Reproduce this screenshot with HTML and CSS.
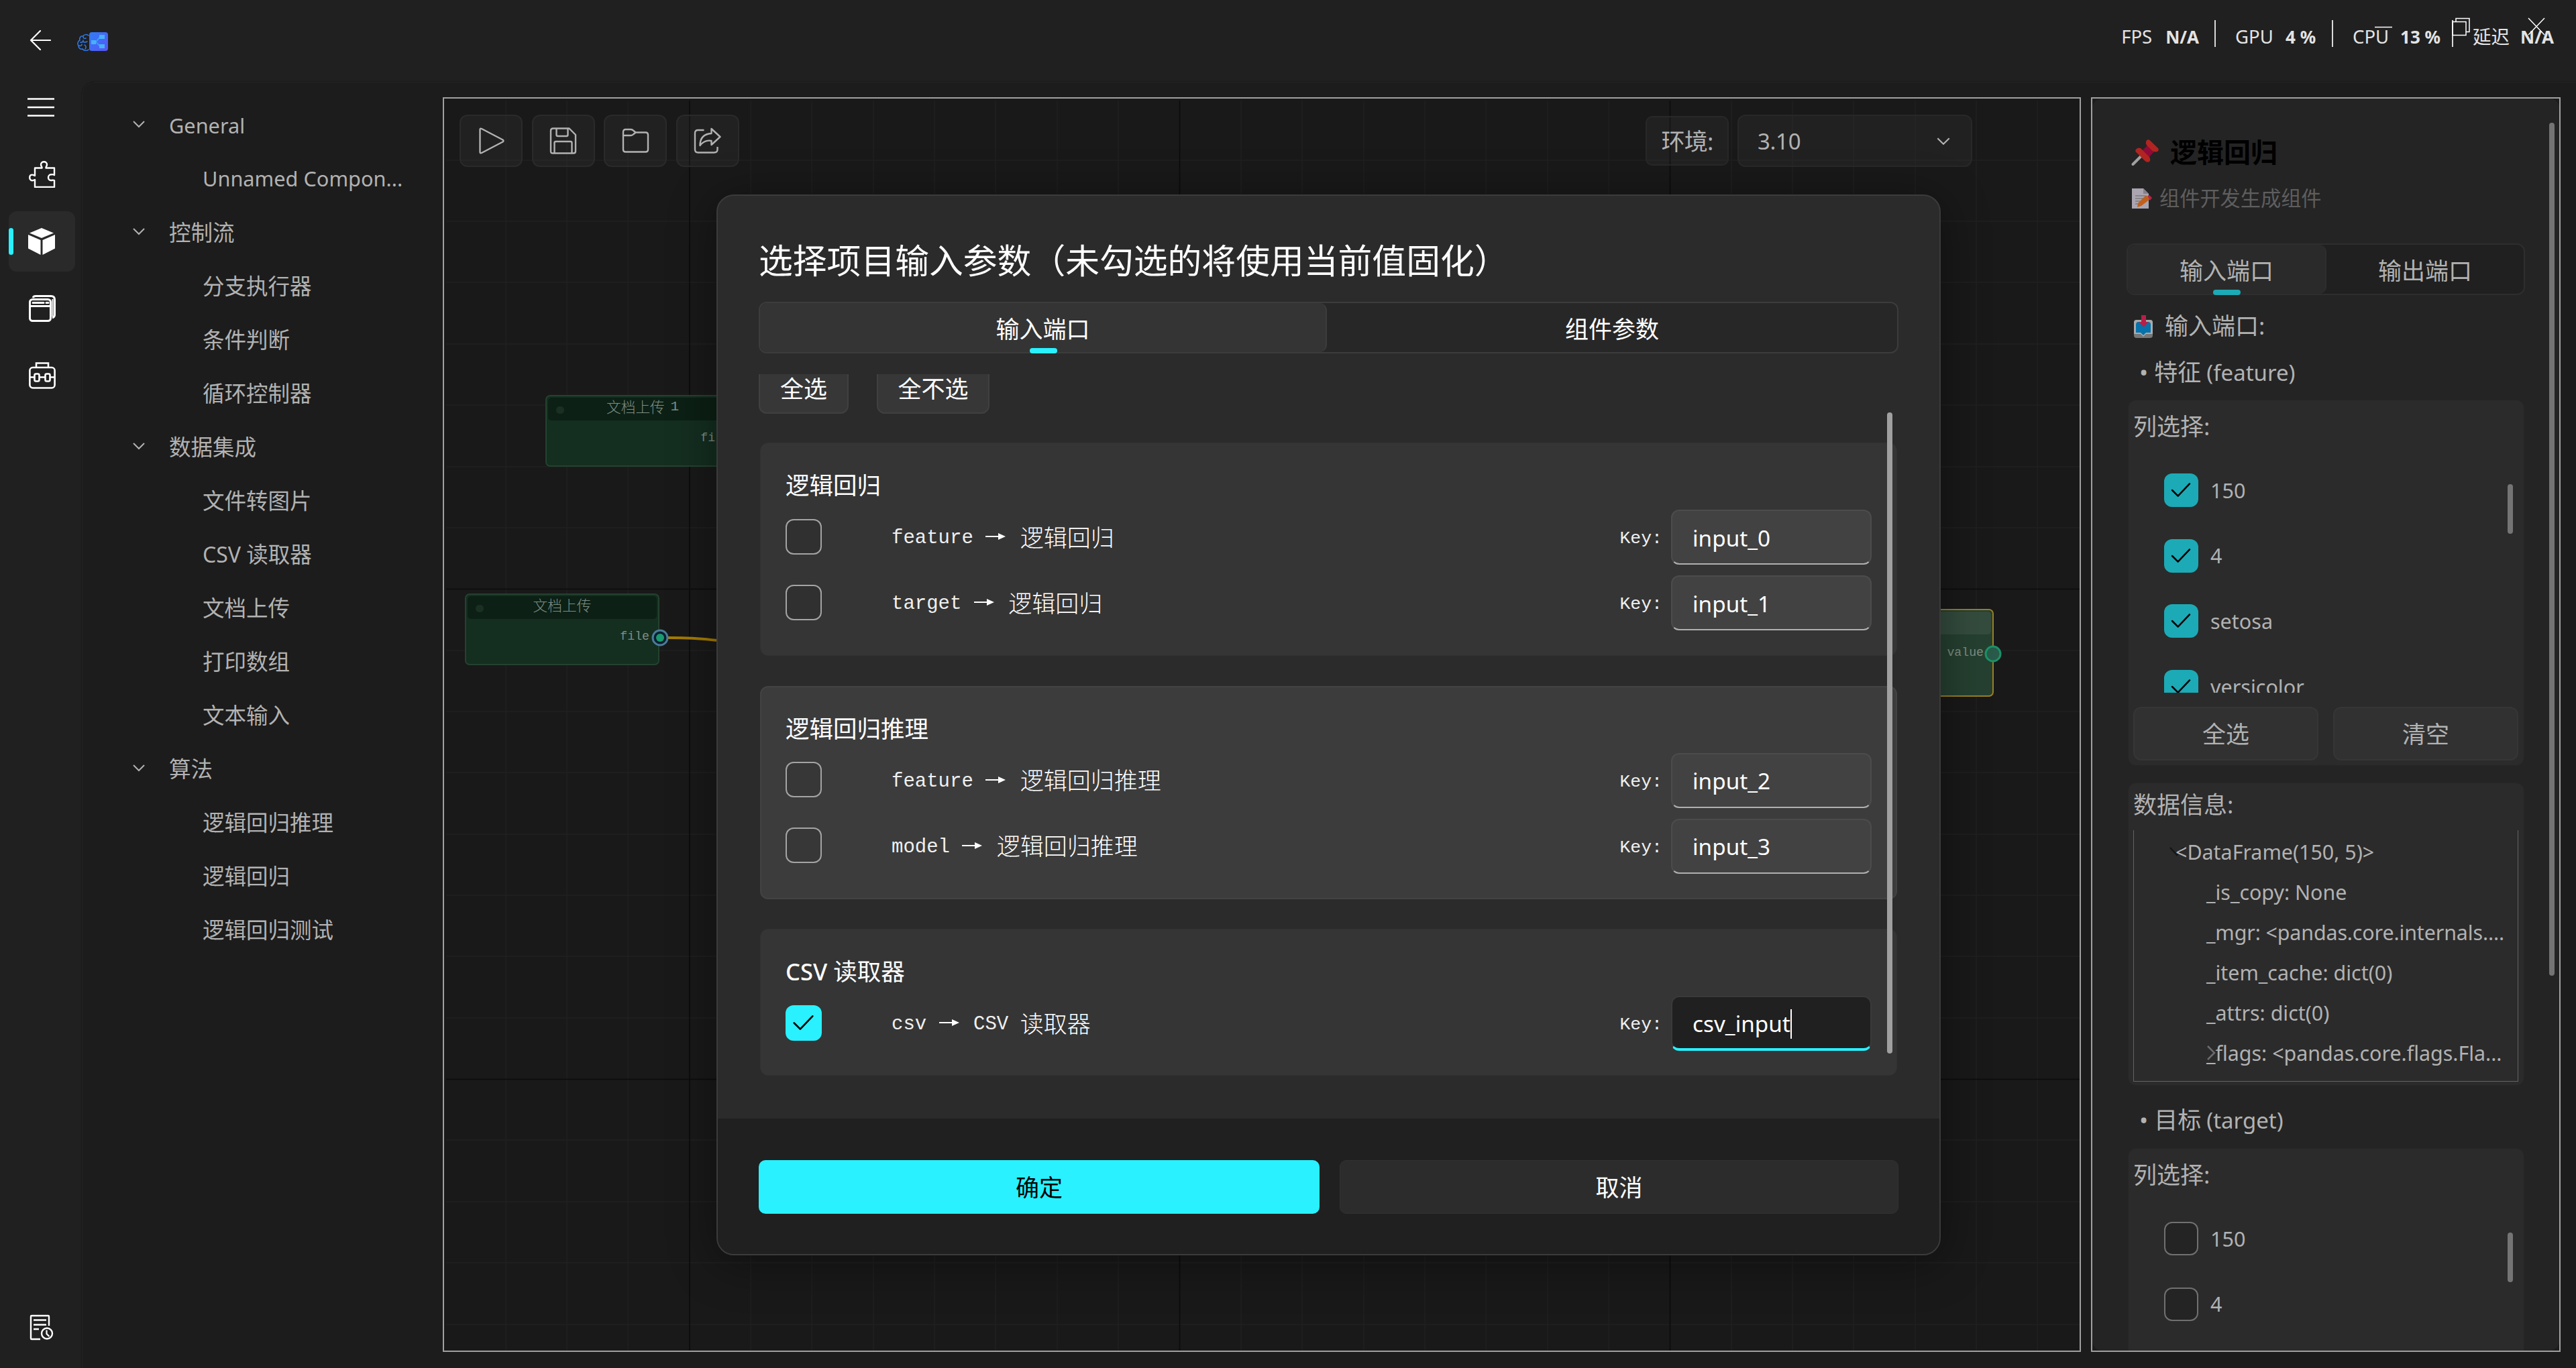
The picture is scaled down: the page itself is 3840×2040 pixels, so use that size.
FILE: index.html
```html
<!DOCTYPE html>
<html lang="zh-CN">
<head>
<meta charset="utf-8">
<title>逻辑回归</title>
<link rel="stylesheet" href="styles.css">
</head>
<body>
<svg class="defs" width="0" height="0">
  <symbol id="chev" viewBox="0 0 18 12"><path d="M1 2l8 8 8-8" fill="none" stroke="currentColor" stroke-width="2"/></symbol>
  <symbol id="tick" viewBox="0 0 52 52"><path d="M12 26l9 9 18-19" fill="none" stroke="#000" stroke-width="2.6" stroke-linecap="round" stroke-linejoin="round"/></symbol>
</svg>

<header class="topbar">
  <div class="brand">
    <svg class="back" viewBox="0 0 32 30"><path d="M31 15H2M16 1L2 15l14 14" fill="none" stroke="#fff" stroke-width="2.2" stroke-linecap="round" stroke-linejoin="round"/></svg>
    <svg class="logo" viewBox="0 0 46 28">
      <defs><linearGradient id="lg" x1="0" y1="0" x2="1" y2="1"><stop offset="0" stop-color="#2f7cf6"/><stop offset="1" stop-color="#5a55f5"/></linearGradient></defs>
      <path d="M17 5C15 3 10 3 9 6 5 5 3 9 4 12 1 13 0 18 2 20 2 24 5 26 8 25 10 28 15 28 17 26M9 7C9 9 11 10 13 9M5 15C8 16 9 13 9 12M9 14C11 16 13 15 15 14M3 20C5 21 7 20 7 18M11 19C13 20 14 23 12 25" fill="none" stroke="#2f7cf0" stroke-width="1.5" stroke-linecap="round"/>
      <rect x="18" y="0" width="28" height="28" rx="4" fill="url(#lg)"/>
      <path d="M25 14.500h3L34 7h4M28 14.500L34 21h4" fill="none" stroke="#3aa0f8" stroke-width="1.8"/>
      <path d="M21 12h7v6h-7zM33 4h8v6h-8zM33 18h8v6h-8z" fill="#4ab0fa"/>
    </svg>
  </div>
  <div class="stats">
    <div class="stat"><span class="k fps">FPS</span><b>N/A</b></div>
    <div class="stat s2"><span class="k">GPU</span><b>4 %</b></div>
    <div class="stat s3"><span class="k">CPU</span><b>13 %</b></div>
    <div class="stat s4"><span class="k">延迟</span><b>N/A</b></div>
  </div>
  <svg class="winctl" viewBox="0 0 260 30"><path d="M0 14.500H26" stroke="#fff" stroke-width="1.500" fill="none"/><path d="M116 6.500h20v20h-20zM121 6V1.500h20v20h-5M229 1l24 25M253 1l-24 25" fill="none" stroke="#fff" stroke-width="1.500"/></svg>
</header>

<div class="shell">
  <nav class="rail">
    <div class="item"><svg viewBox="0 0 40 40"><path d="M0 7.500h40M0 20h40M0 32.500h40" stroke="#fff" stroke-width="2.400" fill="none"/></svg></div>
    <div class="item"><svg viewBox="0 0 40 40"><path d="M9 10.500H19.500C20 9 18 8 18 5.500 18 3 20 1.300 22.500 1.300S27 3 27 5.500C27 8 25 9 25.500 10.500H38V21C36 19.500 34.500 20.300 33 20.300 30.500 20.300 29 22.500 29 24.800S30.500 29 33 29C35 29 36 28 38 29V39H9V28C7 29 6.500 29.200 5 29.200 2.500 29.200 1.200 27 1.200 24.800S2.500 20.600 5 20.600C6.500 20.600 7 21 9 22Z" fill="none" stroke="#fff" stroke-width="2.400" stroke-linejoin="round"/></svg></div>
    <div class="item on"><svg viewBox="0 0 40 40"><path d="M20 0l18 7.500L20 15 2 7.500zM0 10l18.500 8v22L0 30.500zM40 10l-18.500 8v22L40 30.500z" fill="#fff"/></svg></div>
    <div class="item"><svg viewBox="0 0 40 40"><rect x="1.500" y="6.500" width="31" height="32" rx="4" fill="none" stroke="#fff" stroke-width="3"/><path d="M6 4Q7 1.500 10 1.500H33Q38.500 1.500 38.500 7V30Q38 33 35 34M2 16.500H32" fill="none" stroke="#fff" stroke-width="3"/><path d="M35.500 6v26" stroke="#fff" stroke-width="2"/><path d="M6 11.500H22M26 11.500h3" stroke="#fff" stroke-width="3" stroke-linecap="round"/></svg></div>
    <div class="item"><svg viewBox="0 0 40 40"><rect x="1.400" y="8" width="37.200" height="30.500" rx="4.500" fill="none" stroke="#fff" stroke-width="2.600"/><path d="M11 8V1.500H29V8M2 22.500H8M16 22.500h8M32 22.500h6" fill="none" stroke="#fff" stroke-width="2.600"/><rect x="8.500" y="17.500" width="7" height="11" rx="2" fill="none" stroke="#fff" stroke-width="2.600"/><rect x="24.500" y="17.500" width="7" height="11" rx="2" fill="none" stroke="#fff" stroke-width="2.600"/></svg></div>
    <div class="item last"><svg viewBox="0 0 40 40"><path d="M17 37H4Q3 37 3 36V3Q3 2 4 2H29Q30 2 30 3V17" fill="none" stroke="#fff" stroke-width="2.400"/><path d="M7 8.500H26M7 15.500H26M7 22H15" stroke="#fff" stroke-width="2.400"/><circle cx="27" cy="28.500" r="8" fill="none" stroke="#fff" stroke-width="2.400"/><path d="M26.500 23.500V29l4 4" fill="none" stroke="#fff" stroke-width="2.200"/></svg></div>
  </nav>

  <main class="content">
    <ul class="tree">
      <li class="g"><svg><use href="#chev"/></svg><span class="lat">General</span></li>
      <li class="lat">Unnamed Compon...</li>
      <li class="g"><svg><use href="#chev"/></svg>控制流</li>
      <li>分支执行器</li>
      <li>条件判断</li>
      <li>循环控制器</li>
      <li class="g"><svg><use href="#chev"/></svg>数据集成</li>
      <li>文件转图片</li>
      <li><span class="csvl">CSV&nbsp;</span>读取器</li>
      <li>文档上传</li>
      <li>打印数组</li>
      <li>文本输入</li>
      <li class="g"><svg><use href="#chev"/></svg>算法</li>
      <li>逻辑回归推理</li>
      <li>逻辑回归</li>
      <li>逻辑回归测试</li>
    </ul>

    <section class="canvas">
      <svg class="grid" width="2438" height="1867">
        <path d="M92 3V1867M183 3V1867M274 3V1867M457 3V1867M548 3V1867M640 3V1867M731 3V1867M822 3V1867M914 3V1867M1005 3V1867M1188 3V1867M1279 3V1867M1371 3V1867M1462 3V1867M1553 3V1867M1645 3V1867M1736 3V1867M1919 3V1867M2010 3V1867M2101 3V1867M2193 3V1867M2284 3V1867M2375 3V1867M3 92H2438M3 183H2438M3 274H2438M3 366H2438M3 457H2438M3 549H2438M3 640H2438M3 823H2438M3 914H2438M3 1005H2438M3 1097H2438M3 1188H2438M3 1279H2438M3 1371H2438M3 1553H2438M3 1645H2438M3 1736H2438M3 1828H2438" stroke="#202020" stroke-width="1.600"/>
        <path d="M366 3V1867M1096.500 3V1867M1827.500 3V1867M3 731.500H2438M3 1462.500H2438" stroke="#0c0c0c" stroke-width="1.600"/>
        <path d="M334 804C370 804 390 805 460 815" stroke="#a67c00" stroke-width="4" fill="none"/>
      </svg>
      <div class="tools">
        <div class="btns">
          <div class="tb"><svg viewBox="0 0 40 40"><path d="M3 3.500Q3 1 5.500 2L37 18.500Q39 20 37 21.500L5.500 38Q3 39 3 36.500Z"/></svg></div>
          <div class="tb"><svg viewBox="0 0 40 40"><path d="M5 1.500H29L38.500 11V35.500Q38.500 38.500 35.500 38.500H4.500Q1.500 38.500 1.500 35.500V5Q1.500 1.500 5 1.500ZM10 2V11Q10 13 12 13H25Q27 13 27 11V2M7 38V23Q7 21 9 21H31Q33 21 33 23V38"/></svg></div>
          <div class="tb"><svg viewBox="0 0 40 40"><path d="M1.500 7Q1.500 3 5 3H13Q15 3 17 5L20 7.500H35Q38.500 7.500 38.500 11V33Q38.500 36.500 35 36.500H5Q1.500 36.500 1.500 33ZM2 12H13Q15 12 17 10L20 7.500"/></svg></div>
          <div class="tb"><svg viewBox="0 0 40 40"><path d="M15 4H6Q1.500 4 1.500 8.500V33Q1.500 37.500 6 37.500H30Q35 37.500 35 33V29M26 2L39 14 26 26V20Q16 18 9 27 9 10 26 9Z"/></svg></div>
        </div>
        <div class="env">
          <div class="envlabel">环境:</div>
          <div class="combo"><span>3.10</span><svg><use href="#chev"/></svg></div>
        </div>
      </div>
      <div class="node n1"><div class="nh"><i></i>文档上传&nbsp;<span class="mono">1</span></div><div class="np">file</div></div>
      <div class="node n2"><div class="nh"><i></i>文档上传</div><div class="np">file</div></div>
      <svg class="port p2" viewBox="0 0 26 26"><circle cx="13" cy="13" r="11" fill="#0c2030" stroke="#4a7c98" stroke-width="3"/><circle cx="13" cy="13" r="6" fill="#1a9a6e"/></svg>
      <div class="node n3"><div class="nh"></div><div class="np">value</div></div>
      <svg class="port p3" viewBox="0 0 26 26"><circle cx="13" cy="13" r="11" fill="#2a5a4a" stroke="#1a9268" stroke-width="3"/></svg>
    </section>

    <aside class="panel">
      <div class="inner">
        <h1><svg viewBox="0 0 42 40"><path d="M2.500 38L15 25.500" stroke="#a0a0a0" stroke-width="4" stroke-linecap="round"/><path d="M16 18L25 9l10 9-9 10z" fill="#8e0a38"/><path d="M22 4.500Q23 0 27 1.500L40.500 14.500Q41.500 19 37 19.500 33 19.500 31 17.500L23 9.500Q21 7.500 22 4.500ZM6.500 16.500Q9 12.500 14 14L27 27Q30 33 26 34.500 23 35.500 20 32.500L8.500 21Q5.500 19 6.500 16.500Z" fill="#b22420"/></svg>逻辑回归</h1>
        <p class="desc"><svg viewBox="0 0 30 30"><path d="M0 0H17L25 8V30H0Z" fill="#aaa5b0"/><path d="M17 0v8h8z" fill="#86808f"/><path d="M5 11h15M5 15h14M5 19h10M5 23h6" stroke="#666" stroke-width="1.200"/><path d="M9 22L21 10l6 6-13 10-6 2z" fill="#c0601c"/><path d="M23 11l3-1 4 4-3 4z" fill="#b52548"/></svg>组件开发生成组件</p>
        <div class="tabs ptabs"><div class="tab on">输入端口</div><div class="tab">输出端口</div></div>
        <div class="cap"><svg viewBox="0 0 28 34"><rect y="7" width="28" height="27" rx="4" fill="#777"/><path d="M4 7H24Q28 7 28 11V28L18 28 14 32 10 28H0V11Q0 7 4 7Z" fill="#aaa"/><path d="M7 10H21Q25 10 25 14V26H18L14 30 10 26H3V14Q3 10 7 10Z" fill="#0672ac"/><path d="M11 0h7v10h4l-7.500 8L7 10h4z" fill="#b52048"/></svg>输入端口:</div>
        <div class="port-name">•<span>特征 <span class="lat">(feature)</span></span></div>
        <div class="box select">
          <div class="bt">列选择:</div>
          <div class="rows">
            <div class="row"><svg class="cb on"><use href="#tick"/></svg>150</div>
            <div class="row"><svg class="cb on"><use href="#tick"/></svg>4</div>
            <div class="row"><svg class="cb on"><use href="#tick"/></svg>setosa</div>
            <div class="row"><svg class="cb on"><use href="#tick"/></svg>versicolor</div>
            <i class="sb"></i>
          </div>
          <div class="two"><div class="btn">全选</div><div class="btn">清空</div></div>
        </div>
        <div class="box info">
          <div class="bt">数据信息:</div>
          <div class="dump">
            <div class="root"><svg viewBox="0 0 22 14"><path d="M1 1l10 11L21 1" fill="none" stroke="#161616" stroke-width="2.500"/></svg><span>&lt;DataFrame(150, 5)&gt;</span></div>
            <div>_is_copy: None</div>
            <div class="mgr">_mgr: &lt;pandas.core.internals....</div>
            <div>_item_cache: dict(0)</div>
            <div>_attrs: dict(0)</div>
            <div class="fl"><svg viewBox="0 0 14 22"><path d="M2 1l10 10L2 21" fill="none" stroke="#6c6c6c" stroke-width="2.500"/></svg>_flags: &lt;pandas.core.flags.Fla...</div>
          </div>
        </div>
        <div class="port-name t">•<span>目标 <span class="lat">(target)</span></span></div>
        <div class="box select">
          <div class="bt">列选择:</div>
          <div class="rows">
            <div class="row"><i class="cb"></i>150</div>
            <div class="row"><i class="cb"></i>4</div>
            <i class="sb"></i>
          </div>
        </div>
      </div>
      <i class="psb"></i>
    </aside>
  </main>
</div>

<div class="dialog">
  <div class="dbody">
    <h2>选择项目输入参数（未勾选的将使用当前值固化）</h2>
    <div class="tabs dtabs"><div class="tab on">输入端口</div><div class="tab">组件参数</div></div>
    <div class="view">
      <div class="quick"><div class="btn">全选</div><div class="btn">全不选</div></div>
      <div class="card">
        <h3>逻辑回归</h3>
        <div class="prow"><i class="cb"></i><div class="lbl"><span class="mono">feature <svg class="arr" viewBox="0 0 32 14"><path d="M1 7H24" stroke="#fff" stroke-width="2"/><path d="M20 2l11 5-11 5z" fill="#fff"/></svg> </span>逻辑回归</div><span class="key">Key:</span><div class="inp">input_0</div></div>
        <div class="prow"><i class="cb"></i><div class="lbl"><span class="mono">target <svg class="arr" viewBox="0 0 32 14"><path d="M1 7H24" stroke="#fff" stroke-width="2"/><path d="M20 2l11 5-11 5z" fill="#fff"/></svg> </span>逻辑回归</div><span class="key">Key:</span><div class="inp">input_1</div></div>
      </div>
      <div class="card hov">
        <h3>逻辑回归推理</h3>
        <div class="prow"><i class="cb"></i><div class="lbl"><span class="mono">feature <svg class="arr" viewBox="0 0 32 14"><path d="M1 7H24" stroke="#fff" stroke-width="2"/><path d="M20 2l11 5-11 5z" fill="#fff"/></svg> </span>逻辑回归推理</div><span class="key">Key:</span><div class="inp">input_2</div></div>
        <div class="prow"><i class="cb"></i><div class="lbl"><span class="mono">model <svg class="arr" viewBox="0 0 32 14"><path d="M1 7H24" stroke="#fff" stroke-width="2"/><path d="M20 2l11 5-11 5z" fill="#fff"/></svg> </span>逻辑回归推理</div><span class="key">Key:</span><div class="inp">input_3</div></div>
      </div>
      <div class="card">
        <h3><span class="csv">CSV</span> 读取器</h3>
        <div class="prow"><svg class="cb on"><use href="#tick"/></svg><div class="lbl"><span class="mono">csv <svg class="arr" viewBox="0 0 32 14"><path d="M1 7H24" stroke="#fff" stroke-width="2"/><path d="M20 2l11 5-11 5z" fill="#fff"/></svg> CSV </span>读取器</div><span class="key">Key:</span><div class="inp focus">csv_input<i></i></div></div>
      </div>
    </div>
    <i class="dsb"></i>
  </div>
  <div class="foot"><div class="ok">确定</div><div class="cancel">取消</div></div>
</div>
</body>
</html>
```
FILE: styles.css
```css
* { box-sizing: border-box; }
body { margin: 0; width: 3840px; height: 2040px; overflow: hidden; position: relative; display: flex; flex-direction: column; background: #202020; color: #b2b2b2; font-family: "Noto Sans", "Noto Sans CJK SC", sans-serif; font-size: 35px; line-height: 1; }
h1, h2, h3, p, ul { margin: 0; padding: 0; font-weight: 400; }
i { display: block; }
.defs { position: absolute; }
svg { display: block; flex: none; }

.topbar { height: 122px; flex: none; display: flex; justify-content: space-between; position: relative; }
.brand { display: flex; padding: 45px 0 0 44px; }
.back { width: 32px; height: 30px; }
.logo { width: 46px; height: 28px; margin: 3px 0 0 39px; }
.stats { display: flex; padding: 30px 33px 0 0; height: 70px; color: #e4e4e4; font-size: 27px; white-space: nowrap; }
.stat { display: flex; align-items: center; height: 40px; padding-top: 9px; }
.stat .k { width: 75px; flex: none; font-size: 27.500px; }
.stat .fps { width: 66px; }
.stat b { font-size: 26px; }
.stat + .stat { border-left: 2px solid #d8d8d8; padding-left: 29px; margin-left: 23px; }
.stat.s2 { width: 152px; }
.stat.s3 { width: 156px; }
.stat.s3 .k { width: 71px; }
.stat.s4 .k { width: 71px; }
.winctl { position: absolute; left: 3540px; top: 26px; width: 260px; height: 30px; }

.shell { flex: 1; display: flex; min-height: 0; }
.rail { width: 122px; display: flex; flex-direction: column; gap: 10px; padding: 0 10px 15px 13px; flex: none; }
.rail .item { height: 90px; border-radius: 12px; display: flex; align-items: center; padding-left: 30px; }
.rail .item:first-child { height: 76px; padding-left: 28px; margin-bottom: 7px; }
.rail .item svg { width: 40px; height: 40px; }
.rail .on { background: #2a2a2a; padding-left: 0; }
.rail .on::before { content: ""; width: 7px; height: 40px; border-radius: 4px; background: #29f1ff; margin-right: 22px; }
.rail .last { margin-top: auto; }

.content { flex: 1; display: flex; background: #1c1c1c; border: solid #232323; border-width: 1px 0 0 1px; border-radius: 20px 0 0 0; padding: 22px 23px 24px 0; box-shadow: 0 0 2px #0c0c0c; }
.tree { width: 537px; flex: none; list-style: none; font-size: 32.500px; padding-top: 1px; }
.tree li { height: 80px; display: flex; align-items: center; padding: 2px 0 0 179px; }
.tree li.g { padding-left: 75px; }
.tree li.g svg { width: 18px; height: 12px; margin-right: 36px; margin-top: -4px; }
.tree .lat { font-size: 30.700px; padding-top: 0; }
.tree .csvl { font-size: 32px; }

.canvas { width: 2442px; flex: none; border: 2px solid #a0a0a0; background: #191919; position: relative; overflow: hidden; }
.grid { position: absolute; left: 0; top: 0; }
.tools { position: relative; display: flex; justify-content: space-between; padding: 24px 160px 0 23px; }
.btns { display: flex; gap: 13.500px; }
.tb { width: 94px; height: 78px; border-radius: 12px; border: 2px solid #2a2a2a; background: rgba(255,255,255,.035); display: flex; align-items: center; justify-content: center; }
.tb svg { width: 41px; height: 40px; fill: none; stroke: #b2b2b2; stroke-width: 2.400; stroke-linejoin: round; }
.env { display: flex; gap: 13px; align-items: center; }
.envlabel { width: 124px; height: 74px; border-radius: 10px; border: 2px solid #282828; background: rgba(255,255,255,.035); display: flex; align-items: center; justify-content: center; letter-spacing: -.8px; }
.combo { width: 350px; height: 78px; border-radius: 12px; border: 2px solid #282828; background: rgba(255,255,255,.035); display: flex; align-items: center; justify-content: space-between; padding: 0 31px 0 28px; font-size: 33px; letter-spacing: -.3px; }
.combo svg { width: 20px; height: 13px; }

.node { position: absolute; width: 290px; height: 107px; border: 2px solid #24422f; border-radius: 7px; background: #142e20; color: #7e8e84; font-size: 21.700px; font-weight: 300; }
.nh { height: 34px; margin: 2px; background: #0c2015; border-radius: 5px; display: flex; align-items: center; justify-content: center; position: relative; padding-bottom: 7px; }
.nh i { position: absolute; left: 12px; top: 13px; width: 12px; height: 11px; border-radius: 5px; background: #1a3022; }
.np { text-align: right; padding: 14px 13px 0 0; font: 18.200px/20px "Liberation Mono", monospace; }
.node .mono { font: 21px "Liberation Mono", monospace; margin-left: 3px; }
.n1 { left: 151px; top: 442px; }
.n2 { left: 31px; top: 738px; }
.n3 { left: 2020px; top: 761px; height: 131px; background: #254030; border-color: #9a7f22; }
.n3 .nh { background: #344c3e; }
.n3 .np { padding-top: 15px; }
.port { position: absolute; width: 26px; height: 26px; }
.p2 { left: 309px; top: 791px; }
.p3 { left: 2296px; top: 815px; }

.panel { margin-left: 15px; width: 700px; flex: none; border: 2px solid #a0a0a0; background: #1c1c1c; position: relative; overflow: hidden; }
.inner { height: 1867px; overflow: hidden; background: #242424; border-radius: 14px; padding: 58px 52px 0 52px; display: flex; flex-direction: column; }
.inner > * { flex: none; }
h1 { height: 44px; display: flex; align-items: center; font-size: 40px; font-weight: 700; color: #000; padding-left: 6px; }
h1 svg { width: 42px; height: 40px; margin-right: 16px; }
.desc { height: 34px; margin-top: 30px; display: flex; align-items: center; font-size: 30.200px; color: #5e5e5e; padding-left: 7px; }
.desc svg { width: 30px; height: 30px; margin-right: 11px; }
.tabs { display: flex; border: 2px solid #2e2e2e; border-radius: 12px; background: #202020; }
.tab { flex: 1; display: flex; align-items: center; justify-content: center; position: relative; padding-top: 3px; }
.tab.on { background: #2a2a2a; border-right: 2px solid #2e2e2e; border-radius: 11px; }
.tab.on::after { content: ""; position: absolute; bottom: -2px; left: calc(50% - 20px); width: 41px; height: 8px; border-radius: 4px; background: #1caab6; }
.ptabs { height: 77px; width: 594px; margin: 50px 0 0 -1px; }
.cap { height: 36px; margin-top: 27px; display: flex; align-items: center; padding-left: 10px; }
.cap svg { width: 28px; height: 34px; margin: 3px 18px 0 0; }
.port-name { height: 36px; margin: 33px 0 0 18px; display: flex; align-items: center; gap: 9px; }
.port-name .lat { font-size: 33px; margin-left: -1px; }
.box { background: #2b2b2b; border: 1px solid #262626; border-radius: 12px; width: 591px; margin-left: 1px; padding: 20px 8px 0 7px; }
.select { height: 546px; margin-top: 24px; }
.bt { height: 36px; display: flex; align-items: center; }
.rows { height: 362px; margin-top: 18px; padding-top: 35px; overflow: hidden; position: relative; font-size: 30.500px; }
.row { height: 50px; margin-bottom: 47.600px; padding-left: 46px; display: flex; align-items: center; gap: 18px; }
.cb { width: 51px; height: 50px; border-radius: 12px; border: 2px solid #707070; background: #242424; flex: none; }
.cb.on { border: 0; background: #1caab6; }
.sb { position: absolute; right: 8px; top: 51px; width: 8px; height: 74px; border-radius: 4px; background: #747474; }
.two { display: flex; gap: 22px; margin-top: 21px; }
.btn { flex: 1; height: 80px; border: 2px solid #363636; border-radius: 12px; background: #313131; display: flex; align-items: center; justify-content: center; padding-top: 1px; }
.info { height: 452px; margin-top: 25px; padding-top: 13px; }
.dump { margin-top: 21px; height: 375px; border: solid #646464; border-width: 0 1px 1px; font-size: 30.400px; padding: 3px 0 0 108px; white-space: nowrap; }
.dump > div { height: 60px; display: flex; align-items: center; position: relative; }
.dump .mgr { letter-spacing: -.12px; }
.dump .root { margin-left: -46px; }
.dump .root span { position: relative; }
.dump .root svg { position: absolute; left: -9px; top: 22px; width: 22px; height: 14px; }
.dump .fl svg { position: absolute; left: 0; top: 18px; width: 14px; height: 22px; }
.port-name.t { margin-top: 32px; }
.port-name.t + .select { margin-top: 25px; }
.psb { position: absolute; left: 681px; top: 36px; width: 8px; height: 1272px; border-radius: 4px; background: #747474; }

.dialog { position: absolute; left: 1068px; top: 290px; width: 1825px; height: 1582px; border: 2px solid #3b3b3b; border-radius: 26px; background: #2b2b2b; overflow: hidden; color: #fff; display: flex; flex-direction: column; box-shadow: 0 10px 70px rgba(0,0,0,.4); }
.dbody { height: 1376px; padding: 65px 61px 0 61px; position: relative; flex: none; }
h2 { height: 64px; line-height: 64px; font-size: 50.800px; white-space: nowrap; }
.dtabs { height: 77px; margin-top: 29px; border-color: #3c3c3c; background: #272727; }
.dtabs .tab.on { flex: none; width: 845px; background: #343434; border-color: #3c3c3c; }
.dtabs .tab.on::after { background: #29f1ff; }
.view { margin-top: 31px; overflow: hidden; height: 1056px; }
.quick { display: flex; gap: 42px; margin-top: -20px; }
.quick .btn { flex: none; width: 134px; height: 79px; background: #373737; border-color: #404040; padding-top: 3px; }
.quick .btn + .btn { width: 168px; }
.card { height: 318px; width: 1695px; margin: 43px 0 0 2px; background: #353535; border: 1px solid #323232; border-radius: 12px; padding: 43px 37px 0; }
.card + .card { margin-top: 44.500px; }
.card:last-child { height: 219px; }
.card.hov { background: #3c3c3c; border: 2px solid #434343; padding: 42px 36px 0; }
h3 { height: 38px; line-height: 38px; font-size: 35.500px; margin-bottom: 18px; }
.csv { font-size: 34.500px; font-weight: 500; }
.prow { display: flex; align-items: center; height: 82px; }
.prow + .prow { margin-top: 16px; }
.card .cb { width: 54px; height: 53px; border-color: #a4a4a4; background: rgba(0,0,0,.08); margin-top: -2px; }
.card .cb.on { background: #29f1ff; }
.lbl { flex: 1; margin-left: 104px; font-weight: 300; display: flex; align-items: center; white-space: pre; }
.lbl .mono { font: 29px/40px "Liberation Mono", monospace; padding-top: 4px; color: #f0f0f0; }
.arr { display: inline-block; width: 32px; height: 14px; vertical-align: middle; margin: -4px 3px 0 0; }
.key { font: 26.500px/40px "Liberation Mono", monospace; margin-right: 13px; padding-top: 4px; color: #f0f0f0; }
.inp { width: 299px; height: 82px; background: #424242; border: 2px solid #4c4c4c; border-bottom: 2px solid #b0b0b0; border-radius: 12px; display: flex; align-items: center; padding: 3px 0 0 30px; font-size: 33.300px; }
.inp.focus { background: #202020; border-color: #3a3a3a; border-bottom: 4px solid #29f1ff; padding-top: 4px; }
.inp i { width: 2px; height: 44px; background: #fff; }
.dsb { position: absolute; left: 1743px; top: 323px; width: 8px; height: 956px; border-radius: 4px; background: #a0a0a0; }
.foot { flex: 1; background: #202020; padding: 62px 61px 0; display: flex; gap: 30px; }
.ok, .cancel { height: 80px; border-radius: 10px; display: flex; align-items: center; justify-content: center; padding-top: 1px; }
.ok { width: 836px; background: #29f1ff; color: #000; }
.cancel { flex: 1; background: #2c2c2c; border: 1px solid #323232; }
```
